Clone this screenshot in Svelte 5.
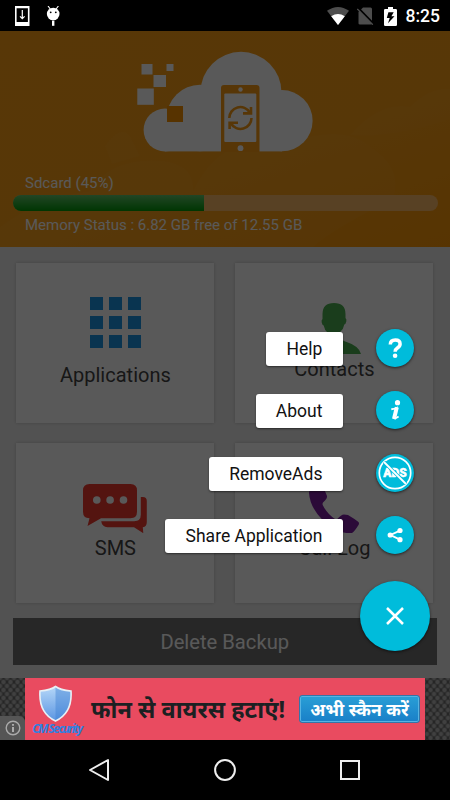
<script lang="ts">
  /**
   * Backup home screen with the floating action menu expanded
   */

  interface Action {
    label: string;
    icon: "help" | "about" | "ads" | "share";
  }

  const actions: Action[] = [
    { label: "Help", icon: "help" },
    { label: "About", icon: "about" },
    { label: "RemoveAds", icon: "ads" },
    { label: "Share Application", icon: "share" },
  ];

  let usedPercent = $state(45);
  let menuOpen = $state(true);
</script>

<div class="screen">
  <header class="status-bar">
    <div class="status-left">
      <svg width="15" height="20" viewBox="0 0 15 20">
        <path d="M0 0h14.5v20H0z M1.6 2.2v13.8h11.3V2.2z" fill="#fff" fill-rule="evenodd" />
        <path d="M7.3 4v8.4M5 10.4l2.3 2.2 2.3-2.2" fill="none" stroke="#fff" stroke-width="1.2" />
      </svg>
      <svg width="15" height="20" viewBox="0 0 15 20">
        <circle cx="7.2" cy="8" r="6.3" fill="#fff" />
        <path d="M2 0l3 4M12.4 0l-3 4" stroke="#fff" stroke-width="1.1" />
        <rect x="6" y="14.6" width="2.4" height="5.2" fill="#fff" />
        <circle cx="4.7" cy="6.3" r=".9" />
        <circle cx="9.8" cy="6.3" r=".9" />
      </svg>
    </div>
    <div class="status-right">
      <svg class="wifi" width="22" height="18" viewBox="0 0 22 18">
        <path d="M0 3.8Q11-3.8 22 3.8L11 18z" fill="#4d4d4d" />
        <path d="M4.2 9.2Q11 4.6 17.8 9.2L11 18z" fill="#fff" />
      </svg>
      <svg class="sim" width="17" height="18" viewBox="0 0 17 18">
        <path d="M6 .5h7.5q1.5 0 1.5 1.5v14.5q0 1-1.5 1H3q-1.5 0-1.5-1V5z" fill="#4d4d4d" />
        <path d="M.8 .6l15.500 16" stroke="#000" stroke-width="2.200" />
        <path d="M.3 2l15.500 15.700" stroke="#4d4d4d" stroke-width="1.300" />
      </svg>
      <svg class="battery" width="13" height="19" viewBox="0 0 13 19">
        <path d="M4 0h5v2h2.700q1.300 0 1.300 1.300v14.400q0 1.300-1.300 1.300H1.300Q0 19 0 17.700V3.300Q0 2 1.300 2H4z" fill="#fff" />
        <path d="M9.700 5.200H4.400L2.800 11h2.900L4 16.300l6.500-7H7.400z" />
      </svg>
      <span class="clock">8:25</span>
    </div>
  </header>

  <main class="content">
    <section class="hero">
      <svg class="clouds" width="450" height="216" viewBox="0 0 450 216" aria-hidden="true">
        <g fill="#ffb347" opacity=".1">
          <path d="M0 216v-20q40-30 90-36 20-35 75-30 30 5 28 30 30-60 80-42 70-30 100 0 30 20 20 50-60 30-80 48z" />
          <path d="M350 104q30-34 60-28 20-20 40-18v30q-60 20-100 16z" />
          <path d="M105 115q15-22 25-10l10 20-28 8z" />
        </g>
      </svg>
      <svg class="logo" width="210" height="120" viewBox="120 40 210 120">
        <g fill="#fff">
          <circle cx="241" cy="92.300" r="40.500" />
          <circle cx="282" cy="120.700" r="30.600" />
          <circle cx="200" cy="118" r="33.200" />
          <circle cx="165" cy="130" r="21.400" />
          <rect x="165" y="112" width="117" height="39.400" />
          <rect x="141.500" y="64" width="11" height="10.500" />
          <rect x="166.500" y="64" width="7" height="7" />
          <rect x="153.500" y="75" width="12.500" height="12" />
          <rect x="137.300" y="88.500" width="16.500" height="16.300" />
        </g>
        <rect x="167" y="106" width="16" height="16" fill="#f99300" />
        <path d="M221 152V88q0-3 3-3h32.500q3 0 3 3v64z" fill="#f99c14" />
        <rect x="224.300" y="93.600" width="32" height="48.500" rx="1" fill="#fff" />
        <circle cx="240.500" cy="89.500" r="2.200" fill="#fff" />
        <circle cx="240.500" cy="148.200" r="2.900" fill="#fff" />
        <g fill="none" stroke="#f99c14" stroke-width="2.600">
          <path d="M229.300 118a11 11 0 0 1 20.500-5.500" />
          <path d="M251.500 118a11 11 0 0 1-20.500 5.500" />
          <path d="M251 107v6.400h-8" />
          <path d="M229.600 129v-6.300h8.400" />
        </g>
      </svg>
      <p class="memory-label">Sdcard ({usedPercent}%)</p>
      <div class="progress">
        <div class="progress-fill" style="width: {usedPercent}%"></div>
      </div>
      <p class="memory-label memory-status">Memory Status : 6.82 GB free of 12.55 GB</p>
    </section>

    <section class="cards">
      <div class="card card-apps">
        <svg width="51" height="51" viewBox="0 0 51 51" fill="#1a94e6">
          {#each [0, 19, 38] as y}
            {#each [0, 19, 38] as x}
              <rect {x} {y} width="13" height="13" />
            {/each}
          {/each}
        </svg>
        <span>Applications</span>
      </div>
      <div class="card">
        <svg width="54" height="51" viewBox="307 303 54 51" fill="#4caf50">
          <path d="M322.500 318v-4q0-11 11.500-11t11.500 11v4q1.400 1 .8 3.500-.6 2.800-2 3-.8 4.500-3.800 7v6q1 3 5.500 4.300Q359 346 361 354h-54q2-8 15-11.200 4.500-1.300 5.500-4.300v-6q-3-2.500-3.800-7-1.400-.2-2-3-.6-2.500.8-3.500z" />
        </svg>
        <span>Contacts</span>
      </div>
      <div class="card card-low">
        <svg width="64" height="49" viewBox="83.500 484 64 49">
          <path d="M90 484h41q6.500 0 6.500 6.500v21.300q0 6.500-6.500 6.500h-29.500L88 526l2-7.700q-6.500 0-6.500-6.500v-21.300q0-6.500 6.500-6.500z" fill="#f03a30" />
          <path d="M141.300 497h2q4 0 4 4v21q0 5-4 5.200l.5 6-9.300-6H108q-5.500-.5-6.300-6h33q6.600 0 6.600-6.500z" fill="#f03a30" />
          <g fill="#fff">
            <circle cx="97.300" cy="500" r="3.800" />
            <circle cx="110.600" cy="500" r="3.800" />
            <circle cx="124" cy="500" r="3.800" />
          </g>
        </svg>
        <span>SMS</span>
      </div>
      <div class="card card-low">
        <svg width="50" height="49" viewBox="309 484 50 49" fill="#7b1fa2">
          <path d="M309 493q0-4 5-9h7q3 4 6 12 .5 3-4 6.500-.7 1-.3 2.500 4.500 9 12.300 14 1.500.6 2.500-.3 3.500-4 6.500-4.200l4 .5q6 3.500 10.500 7 1 1.500 0 3-4 6.500-6.500 8-15 1.500-29-12.500-13-13-14-27.500z" />
        </svg>
        <span>Call Log</span>
      </div>
    </section>

    <button class="delete">Delete Backup</button>
    {#if menuOpen}
      <div class="scrim"></div>
    {/if}
  </main>

  <aside class="ad">
    <div class="ad-info">
      <svg width="16" height="16" viewBox="0 0 16 16">
        <circle cx="8" cy="8" r="6.800" fill="none" stroke="#aaa" stroke-width="1.400" />
        <path d="M8 7v5M8 4v1.700" stroke="#bbb" stroke-width="1.700" />
      </svg>
    </div>
    <div class="ad-body">
      <div class="ad-brand">
        <svg width="35" height="37" viewBox="0 0 35 37">
          <defs>
            <linearGradient id="shield" x1="0" y1="0" x2="0" y2="1">
              <stop offset="0" stop-color="#b5d7f8" />
              <stop offset="1" stop-color="#5a95e2" />
            </linearGradient>
          </defs>
          <path d="M17.500 1.500Q22 5 33 6q1.500 22-15.500 30Q.5 28 2 6q11-1 15.500-4.500z" fill="url(#shield)" stroke="#e8f0f5" stroke-width="1.600" />
          <path d="M17.500 2.500Q22 6 32.200 7q1 20-14.700 28z" fill="#3d80d3" opacity=".45" />
        </svg>
        <span>CM Security</span>
      </div>
      <p class="ad-title">फोन से वायरस हटाएं!</p>
      <span class="ad-button">अभी स्कैन करें</span>
    </div>
    <div class="ad-edge"></div>
  </aside>

  <nav class="nav-bar">
    <svg width="22" height="24" viewBox="0 0 22 24">
      <path d="M20 2v20L2 12z" fill="none" stroke="#eee" stroke-width="2" stroke-linejoin="round" />
    </svg>
    <svg width="22" height="22" viewBox="0 0 22 22">
      <circle cx="11" cy="11" r="9.900" fill="none" stroke="#eee" stroke-width="2" />
    </svg>
    <svg width="20" height="20" viewBox="0 0 20 20">
      <rect x="1" y="1" width="18" height="18" fill="none" stroke="#eee" stroke-width="2" />
    </svg>
  </nav>

  {#if menuOpen}
    <div class="fab-menu">
      {#each actions as action}
        <div class="fab-row">
          <span class="fab-label">{action.label}</span>
          <button class="fab-mini" aria-label={action.label}>
            <svg width="38" height="38" viewBox="0 0 38 38">
              {#if action.icon === "help"}
                <path d="M14.300 15.500q.1-4.500 5-4.500 4.800 0 4.800 4 0 2.200-2.700 4-2.300 1.500-2.300 3.700" fill="none" stroke="#fff" stroke-width="3.500" />
                <circle cx="19.100" cy="26.800" r="2.300" fill="#fff" />
              {:else if action.icon === "about"}
                <circle cx="21.500" cy="11.700" r="2.600" fill="#fff" />
                <path d="M15.300 18.300q3.500-.4 5.300-1.300l-2.300 9.700q-.4 1.800 4.300-1.200" fill="none" stroke="#fff" stroke-width="1.900" />
                <path d="M20.800 16.200l-2.800 11.800" stroke="#fff" stroke-width="4" />
              {:else if action.icon === "ads"}
                <circle cx="19" cy="19" r="15.700" fill="none" stroke="#fff" stroke-width="1.700" />
                <text x="19" y="23.400" text-anchor="middle">ADS</text>
                <path d="M8 8l22 22" stroke="#00bcdb" stroke-width="3.200" />
                <path d="M8 8l22 22" stroke="#fff" stroke-width="1.800" />
              {:else}
                <path d="M24 14.700L14.500 19l9.500 4.700" fill="none" stroke="#fff" stroke-width="1.900" />
                <g fill="#fff">
                  <circle cx="24" cy="14.500" r="2.600" />
                  <circle cx="14.200" cy="19" r="2.600" />
                  <circle cx="24" cy="23.700" r="2.600" />
                </g>
              {/if}
            </svg>
          </button>
        </div>
      {/each}
      <button class="fab-main" aria-label="Close menu" onclick={() => (menuOpen = false)}>
        <svg width="18" height="18" viewBox="0 0 18 18">
          <path d="M1 1l16 16M17 1L1 17" stroke="#fff" stroke-width="2.500" />
        </svg>
      </button>
    </div>
  {/if}
</div>

<style>
  :global(body) {
    margin: 0;
    background: #000;
  }

  .screen {
    position: relative;
    display: flex;
    flex-direction: column;
    width: 450px;
    height: 800px;
    overflow: hidden;
    font-family: Roboto, sans-serif;
  }

  svg {
    display: block;
    flex: none;
  }

  p {
    margin: 0;
  }

  button {
    border: none;
    padding: 0;
    font-family: inherit;
  }

  .status-bar {
    display: flex;
    justify-content: space-between;
    align-items: center;
    box-sizing: border-box;
    height: 31px;
    padding: 1px 10px 0 15px;
    background: #000;
  }

  .status-left,
  .status-right {
    display: flex;
    align-items: center;
  }

  .status-left {
    gap: 15.5px;
  }

  .sim {
    margin-left: 8px;
  }

  .battery {
    margin-left: 10px;
  }

  .clock {
    margin-left: 8.5px;
    color: #fff;
    font-size: 17.5px;
    font-weight: 500;
    line-height: 20px;
  }

  .content {
    position: relative;
    display: flex;
    flex-direction: column;
    height: 647px;
    background: #ebebeb;
  }

  .scrim {
    position: absolute;
    inset: 0;
    background: rgba(0, 0, 0, 0.65);
  }

  .hero {
    position: relative;
    display: flex;
    flex-direction: column;
    box-sizing: border-box;
    height: 216px;
    padding: 9px 12.5px 0;
    background: linear-gradient(160deg, #fb9f14 0%, #fa9e16 60%, #f99608 100%);
  }

  .clouds {
    position: absolute;
    inset: 0;
  }

  .logo {
    position: relative;
    align-self: center;
  }

  .memory-label {
    position: relative;
    margin: 13px 0 0 12.5px;
    color: #fff;
    font-size: 15px;
    line-height: 20px;
    white-space: nowrap;
  }

  .memory-status {
    margin-top: 4px;
  }

  .progress {
    position: relative;
    height: 16px;
    margin-top: 2px;
    border-radius: 8px;
    overflow: hidden;
    background: #fdba68;
  }

  .progress-fill {
    height: 100%;
    background: linear-gradient(#62c66a, #009a08);
  }

  .cards {
    display: grid;
    grid-template-columns: 198px 198px;
    grid-auto-rows: 160px;
    gap: 20px 21px;
    padding: 16px 0 0 16.4px;
  }

  .card {
    display: flex;
    flex-direction: column;
    align-items: center;
    gap: 2.5px;
    box-sizing: border-box;
    padding-top: 40px;
    background: #fff;
    box-shadow: 0 0 3px rgba(0, 0, 0, 0.2);
    color: #444;
    font-size: 20px;
    line-height: 24px;
  }

  .card-apps {
    gap: 15px;
    padding-top: 34px;
  }

  .card-low {
    padding-top: 41px;
  }

  .delete {
    height: 47px;
    margin: 15px 13px 0 12.5px;
    background: #707070;
    color: #fff;
    font-size: 20.2px;
  }

  .ad {
    display: flex;
    height: 62px;
    background-color: #262626;
    background-image: radial-gradient(circle, #404040 1.5px, transparent 3px),
      radial-gradient(circle, #404040 1.5px, transparent 3px);
    background-size: 7px 8px;
    background-position:
      0 0,
      3.5px 4px;
  }

  .ad-info {
    display: flex;
    align-self: flex-end;
    align-items: center;
    justify-content: center;
    width: 25px;
    height: 24px;
    background: #555;
    border-top-right-radius: 6px;
  }

  .ad-body {
    display: flex;
    align-items: center;
    box-sizing: border-box;
    width: 400px;
    padding: 0 5px;
    background: #e94b60;
  }

  .ad-brand {
    display: flex;
    flex-direction: column;
    align-items: center;
    width: 54px;
    padding-top: 2px;
    color: #2f80e0;
    font-family: "Open Sans", sans-serif;
    font-size: 12px;
    font-style: italic;
    font-weight: 700;
    line-height: 13px;
    letter-spacing: -1.6px;
    white-space: nowrap;
  }

  .ad-brand svg {
    margin-right: 4px;
  }

  .ad-title {
    width: 209px;
    margin-left: 7px;
    color: #1c2022;
    font-family: "Noto Sans", sans-serif;
    font-size: 23.5px;
    font-weight: 700;
    white-space: nowrap;
  }

  .ad-button {
    box-sizing: border-box;
    flex: none;
    width: 121px;
    height: 28px;
    margin-left: -1px;
    border: 1px solid #3474a8;
    border-radius: 3px;
    background: linear-gradient(#299fd6, #197fc8);
    box-shadow: inset 0 0 0 1px #56b3e2;
    color: #fff;
    font-family: "Noto Sans", sans-serif;
    font-size: 17.6px;
    font-weight: 700;
    line-height: 26px;
    text-align: center;
    white-space: nowrap;
  }

  .nav-bar {
    display: flex;
    align-items: center;
    justify-content: space-between;
    box-sizing: border-box;
    height: 60px;
    padding: 0 90px 0 88px;
    background: #000;
  }

  .fab-menu {
    position: absolute;
    top: 329px;
    right: 20px;
    display: flex;
    flex-direction: column;
    align-items: flex-end;
    gap: 24.4px;
  }

  .fab-row {
    display: flex;
    align-items: center;
    gap: 33.5px;
    margin-right: 15.9px;
  }

  .fab-label {
    box-sizing: border-box;
    height: 34px;
    margin-top: 1.6px;
    padding: 0 20.2px;
    border-radius: 3px;
    background: #fff;
    box-shadow: 0 1px 2px rgba(0, 0, 0, 0.5);
    color: #111;
    font-size: 17.5px;
    line-height: 35px;
  }

  .fab-mini,
  .fab-main {
    border-radius: 50%;
    background: #00bcdb;
    box-shadow: 0 1px 3px rgba(0, 0, 0, 0.6);
  }

  .fab-mini {
    width: 38px;
    height: 38px;
  }

  .fab-mini text {
    fill: #fff;
    stroke: #fff;
    stroke-width: 0.4px;
    font-size: 12px;
    font-weight: 900;
  }

  .fab-main {
    display: flex;
    align-items: center;
    justify-content: center;
    width: 70px;
    height: 70px;
    margin-top: 2px;
  }
</style>
